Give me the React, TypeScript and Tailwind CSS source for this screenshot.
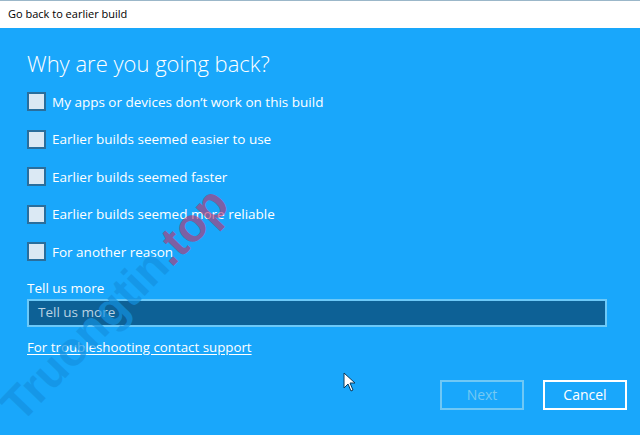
import React from "react";

const reasons = [
  "My apps or devices don\u2019t work on this build",
  "Earlier builds seemed easier to use",
  "Earlier builds seemed faster",
  "Earlier builds seemed more reliable",
  "For another reason",
];

const App: React.FC = () => {
  return (
    <div
      className="relative w-[640px] h-[435px] overflow-hidden bg-[#19a7fb] text-white"
      style={{ fontFamily: '"Open Sans", "Noto Sans", sans-serif' }}
    >
      <div className="h-[28px] bg-white border-t border-[#9bb7c9] flex items-center pl-[8px] text-[11px] text-black">
        Go back to earlier build
      </div>

      <div className="pl-[27px] pr-[33px]">
        <h1 className="mt-[20px] text-[22px] font-light leading-[30px]">
          Why are you going back?
        </h1>

        <div className="mt-[5px] flex flex-col">
          {reasons.map((r) => (
            <label key={r} className="h-[37.5px] flex items-center gap-[6px] text-[13.5px]">
              <span className="w-[19px] h-[19px] border-2 border-[#2a6e9c] bg-[#dbe9f4]" />
              {r}
            </label>
          ))}
        </div>

        <div className="mt-[8px] text-[13.5px] leading-[18px]">Tell us more</div>
        <div className="mt-[2px] h-[28px] border-2 border-[#6cc9f8] bg-[#0d6196] flex items-center pl-[9px] text-[13.5px] text-[#b9d3e4]">
          Tell us more
        </div>

        <a href="#" className="mt-[11px] inline-block text-[13.3px] underline underline-offset-2">
          For troubleshooting contact support
        </a>

        <div className="mt-[22px] -mr-[20px] flex justify-end gap-[19px]">
          <button className="w-[84px] h-[30px] border-2 border-[#6fc8f5] text-[14px] text-[#74c9f3]">
            Next
          </button>
          <button className="w-[84px] h-[30px] border-2 border-white text-[14px] text-white">
            Cancel
          </button>
        </div>
      </div>

      <svg className="absolute left-[343px] top-[372px]" width="14" height="20" viewBox="0 0 14 20">
        <path d="M1 1 L1 16 L5 12 L8 19 L10 18 L7 11 L12 11 Z" fill="white" stroke="#0a3a5c" strokeWidth="1" />
      </svg>

      <div
        className="absolute left-[26px] bottom-[6px] text-[47px] leading-none font-extrabold whitespace-nowrap pointer-events-none"
        style={{ transform: "rotate(-46deg)", transformOrigin: "left bottom", fontFamily: '"Liberation Sans", sans-serif' }}
      >
        <span className="text-[#1491e0]/70">Truongtin</span>
        <span className="text-[#c0306a]/60">.top</span>
      </div>
    </div>
  );
};

export default App;
